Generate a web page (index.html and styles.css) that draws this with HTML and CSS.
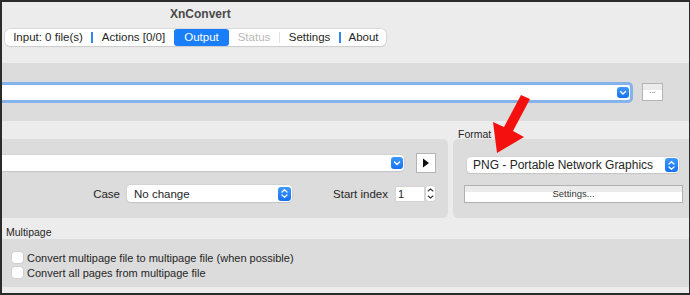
FILE: index.html
```html
<!DOCTYPE html>
<html lang="en">
<head>
  <meta charset="UTF-8" />
  <title>XnConvert</title>
  <link rel="stylesheet" href="styles.css">
</head>
<body>
  <div class="window">
    <div class="titlebar">XnConvert</div>

    <div class="tabs">
      <div class="tab tab-input">Input: 0 file(s)</div>
      <div class="sep sep-blue"></div>
      <div class="tab tab-actions">Actions [0/0]</div>
      <div class="tab tab-output active">Output</div>
      <div class="tab tab-status disabled">Status</div>
      <div class="sep sep-gray"></div>
      <div class="tab tab-settings">Settings</div>
      <div class="sep sep-blue"></div>
      <div class="tab tab-about">About</div>
    </div>

    <div class="dest">
      <div class="combo combo-focus">
        <span class="combo-btn">
          <svg width="12" height="11" viewBox="0 0 12 11"><path d="M3.5 4.5 L6 7 L8.5 4.5" fill="none" stroke="#fff" stroke-width="1.4" stroke-linecap="round" stroke-linejoin="round"/></svg>
        </span>
      </div>
      <div class="dots-btn">...</div>
    </div>

    <div class="groups">
      <div class="group group-name">
        <div class="group-label"></div>
        <div class="panel panel-left">
          <div class="row-name">
            <div class="combo combo-name">
              <span class="combo-btn">
                <svg width="12" height="12" viewBox="0 0 12 12"><path d="M3.5 5 L6 7.5 L8.5 5" fill="none" stroke="#fff" stroke-width="1.4" stroke-linecap="round" stroke-linejoin="round"/></svg>
              </span>
            </div>
            <div class="play-btn">
              <svg width="8" height="10" viewBox="0 0 8 10"><path d="M1 0.5 L7 5 L1 9.5 Z" fill="#111"/></svg>
            </div>
          </div>
          <div class="row-case">
            <span class="lbl">Case</span>
            <div class="combo combo-case">
              <span class="case-text">No change</span>
              <span class="combo-btn stepper-btn">
                <svg width="13" height="13" viewBox="0 0 13 13"><path d="M4 5 L6.5 2.8 L9 5 M4 8 L6.5 10.2 L9 8" fill="none" stroke="#fff" stroke-width="1.3" stroke-linecap="round" stroke-linejoin="round"/></svg>
              </span>
            </div>
            <span class="lbl lbl-start">Start index</span>
            <div class="num-input">1</div>
            <div class="spin">
              <svg width="9" height="15" viewBox="0 0 9 15"><path d="M2.2 5 L4.5 2.8 L6.8 5 M2.2 10 L4.5 12.2 L6.8 10" fill="none" stroke="#333" stroke-width="1.1" stroke-linecap="round" stroke-linejoin="round"/></svg>
            </div>
          </div>
        </div>
      </div>

      <div class="group group-format">
        <div class="group-label">Format</div>
        <div class="panel panel-right">
          <div class="combo combo-format">
            <span class="format-text">PNG - Portable Network Graphics</span>
            <span class="combo-btn stepper-btn">
              <svg width="13" height="13" viewBox="0 0 13 13"><path d="M4 5 L6.5 2.8 L9 5 M4 8 L6.5 10.2 L9 8" fill="none" stroke="#fff" stroke-width="1.3" stroke-linecap="round" stroke-linejoin="round"/></svg>
            </span>
          </div>
          <div class="settings-btn">Settings...</div>
        </div>
      </div>
    </div>

    <div class="section-label">Multipage</div>
    <div class="multipage">
      <label class="check"><span class="box"></span>Convert multipage file to multipage file (when possible)</label>
      <label class="check"><span class="box"></span>Convert all pages from multipage file</label>
    </div>
    <div class="section-label section-misc">Miscellaneous</div>
  </div>

  <!-- red annotation arrow -->
  <svg class="arrow" width="690" height="295" viewBox="0 0 690 295">
    <polygon points="521,95 530,99 513,131 524,137 497,153 493,122 504,127" fill="#f4100f"/>
  </svg>
</body>
</html>
```

FILE: styles.css
```css
body {
  margin: 0;
  position: relative;
  font-family: 'Liberation Sans', Arial, sans-serif;
  color: #262626;
}

.window {
  width: 690px;
  height: 295px;
  box-sizing: border-box;
  border-style: solid;
  border-color: #2b2b2b;
  border-width: 2px 1px 2px 2px;
  background-color: #ececec;
  overflow: hidden;
  display: flex;
  flex-direction: column;
}

.titlebar {
  height: 24px;
  line-height: 24px;
  padding-left: 168px;
  font-size: 12px;
  font-weight: bold;
  color: #4a4a4a;
  flex-shrink: 0;
}

/* segmented tab control */
.tabs {
  display: flex;
  align-items: center;
  align-self: flex-start;
  height: 17px;
  margin: 3px 0 17px 3px;
  background: #fff;
  border-radius: 5px;
  box-shadow: 0 0 0 0.5px #c8c8c8, 0 1px 1px rgba(0,0,0,0.12);
  font-size: 11.5px;
  flex-shrink: 0;
}

.tab {
  height: 17px;
  line-height: 17px;
  text-align: center;
}

.tab-input { width: 86px; }
.tab-actions { width: 81px; }
.tab-output { width: 55px; }
.tab-status { width: 50px; }
.tab-settings { width: 59px; }
.tab-about { width: 45px; }

.tab.active {
  background: #1a7ef8;
  color: #fff;
  border-radius: 3px;
}

.tab.disabled { color: #b9b9b9; }

.sep { width: 2px; height: 11px; flex-shrink: 0; }
.sep-blue { background: #2b86f5; }
.sep-gray { width: 1px; background: #e2e2e2; }

/* destination folder row */
.dest {
  height: 58px;
  box-sizing: border-box;
  background: #dcdcdc;
  display: flex;
  align-items: flex-start;
  padding: 19px 26px 0 0;
  flex-shrink: 0;
}

.combo {
  position: relative;
  background: #fff;
  border-radius: 4px;
  display: flex;
  align-items: center;
  box-shadow: 0 0 0 0.5px #c9c9c9, 0 1px 1px rgba(0,0,0,0.12);
}

.combo-focus {
  flex: 1;
  height: 15px;
  margin-left: -12px;
  border: 3px solid #84b2ea;
  border-radius: 5px;
  box-shadow: none;
  justify-content: flex-end;
  padding-right: 1px;
}

.combo-btn {
  display: flex;
  align-items: center;
  justify-content: center;
  width: 12px;
  height: 11px;
  border-radius: 3px;
  background: linear-gradient(#3f98fd, #1472f0);
}

.dots-btn {
  width: 19px;
  height: 16px;
  margin-left: 9px;
  margin-top: 1px;
  border: 1px solid #b4b4b4;
  background: linear-gradient(#ececec 0, #ececec 35%, #fff 35%);
  font-size: 8px;
  line-height: 14px;
  text-align: center;
  color: #444;
}

/* option groups */
.groups {
  display: flex;
  gap: 5px;
  flex-shrink: 0;
}

.group { display: flex; flex-direction: column; }
.group-name { width: 446px; }
.group-format { flex: 1; }

.group-label {
  height: 18px;
  box-sizing: border-box;
  padding: 7px 0 0 5px;
  font-size: 10.5px;
  line-height: 12px;
}

.panel {
  height: 79px;
  box-sizing: border-box;
  background: #dcdcdc;
}

.panel-left {
  border-radius: 0 5px 5px 0;
  padding: 14px 12px 0 0;
}

.panel-right {
  border-radius: 5px 0 0 5px;
  padding: 18px 6px 0 11px;
}

.row-name {
  display: flex;
  align-items: center;
  height: 20px;
}

.combo-name {
  flex: 1;
  height: 16px;
  margin-left: -12px;
  justify-content: flex-end;
  padding-right: 1px;
}

.combo-name .combo-btn { height: 12px; }

.play-btn {
  width: 18px;
  height: 18px;
  margin-left: 12px;
  border: 1px solid #b4b4b4;
  background: #fff;
  display: flex;
  align-items: center;
  justify-content: center;
}

.row-case {
  display: flex;
  align-items: center;
  justify-content: flex-end;
  height: 17px;
  margin-top: 12px;
  padding-right: 1px;
  font-size: 11.5px;
}

.lbl { margin-right: 7px; }
.lbl-start { margin-left: 41px; margin-right: 8px; }

.combo-case {
  width: 165px;
  height: 17px;
  justify-content: space-between;
  padding: 0 1px 0 7px;
  box-sizing: border-box;
}

.stepper-btn { width: 13px; height: 14px; }

.num-input {
  width: 28px;
  height: 14px;
  box-sizing: border-box;
  background: #fff;
  box-shadow: 0 0 0 0.5px #c9c9c9;
  font-size: 11px;
  line-height: 14px;
  padding-left: 2px;
}

.spin {
  width: 9px;
  height: 15px;
  margin-left: 2px;
  background: #fff;
  border-radius: 3px;
  box-shadow: 0 0 0 0.5px #c9c9c9;
  display: flex;
}

.combo-format {
  height: 16px;
  margin-left: 3px;
  margin-right: 4px;
  justify-content: space-between;
  padding: 0 1px 0 6px;
  font-size: 12px;
}

.settings-btn {
  height: 16px;
  margin-top: 12px;
  border: 1px solid #b0b0b0;
  background: linear-gradient(#ebebeb 0, #ebebeb 40%, #fff 40%);
  font-size: 9.5px;
  line-height: 16px;
  text-align: center;
  color: #333;
}

/* multipage section */
.section-label {
  height: 21px;
  box-sizing: border-box;
  padding: 8px 0 0 4px;
  font-size: 10.5px;
  line-height: 12px;
  flex-shrink: 0;
}

.multipage {
  height: 48px;
  box-sizing: border-box;
  background: #dcdcdc;
  padding: 11px 0 0 10px;
  font-size: 11px;
  flex-shrink: 0;
}

.check {
  display: flex;
  align-items: center;
  height: 15px;
}

.box {
  width: 11px;
  height: 11px;
  margin-right: 4px;
  background: #fff;
  border-radius: 3px;
  box-shadow: 0 0 0 0.5px #c4c4c4;
}

.section-misc { padding-top: 4px; }

.arrow {
  position: absolute;
  left: 0;
  top: 0;
  pointer-events: none;
}
```
